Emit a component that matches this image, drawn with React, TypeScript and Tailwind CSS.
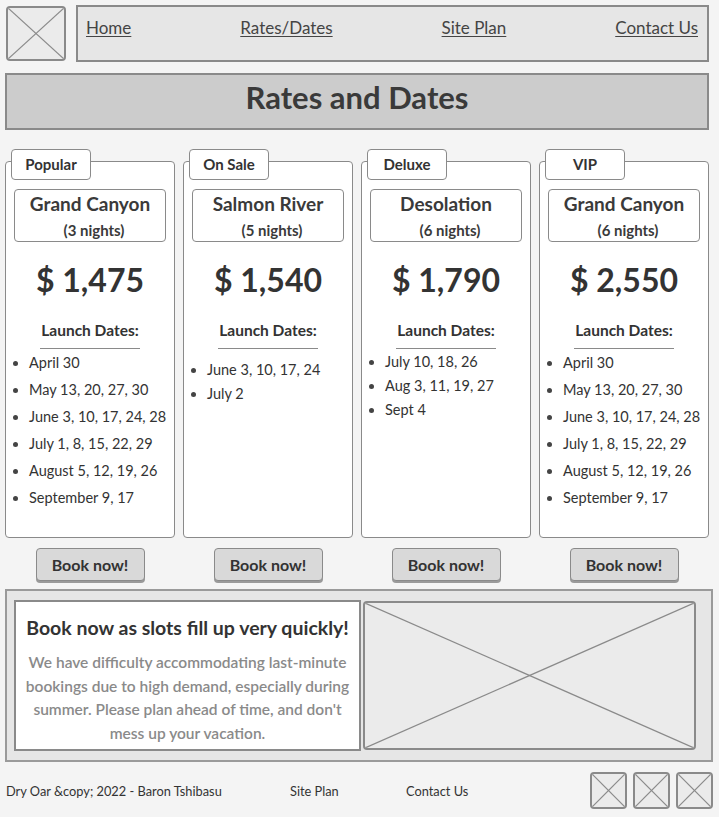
import React from "react";

interface Tour {
  tag: string;
  name: string;
  nights: string;
  price: string;
  dates: string[];
  listClass: string;
}

const tours: Tour[] = [
  {
    tag: "Popular",
    name: "Grand Canyon",
    nights: "(3 nights)",
    price: "$ 1,475",
    dates: ["April 30", "May 13, 20, 27, 30", "June 3, 10, 17, 24, 28", "July 1, 8, 15, 22, 29", "August 5, 12, 19, 26", "September 9, 17"],
    listClass: "leading-[27px] mt-0",
  },
  {
    tag: "On Sale",
    name: "Salmon River",
    nights: "(5 nights)",
    price: "$ 1,540",
    dates: ["June 3, 10, 17, 24", "July 2"],
    listClass: "leading-[24px] mt-[9px]",
  },
  {
    tag: "Deluxe",
    name: "Desolation",
    nights: "(6 nights)",
    price: "$ 1,790",
    dates: ["July 10, 18, 26", "Aug 3, 11, 19, 27", "Sept 4"],
    listClass: "leading-[24px] mt-[1px]",
  },
  {
    tag: "VIP",
    name: "Grand Canyon",
    nights: "(6 nights)",
    price: "$ 2,550",
    dates: ["April 30", "May 13, 20, 27, 30", "June 3, 10, 17, 24, 28", "July 1, 8, 15, 22, 29", "August 5, 12, 19, 26", "September 9, 17"],
    listClass: "leading-[27px] mt-0",
  },
];

function Placeholder({ className }: { className: string }) {
  return (
    <div className={`relative overflow-hidden rounded-[4px] border-2 border-[#8a8a8a] bg-[#ebebeb] ${className}`}>
      <svg className="absolute inset-0 h-full w-full" preserveAspectRatio="none" viewBox="0 0 100 100">
        <line x1="0" y1="0" x2="100" y2="100" stroke="#8a8a8a" strokeWidth="1.2" vectorEffect="non-scaling-stroke" />
        <line x1="100" y1="0" x2="0" y2="100" stroke="#8a8a8a" strokeWidth="1.2" vectorEffect="non-scaling-stroke" />
      </svg>
    </div>
  );
}

function TourCard({ tour }: { tour: Tour }) {
  return (
    <div className="flex flex-col items-center">
      <div className="relative h-[377px] w-full rounded-[4px] border-[1.5px] border-[#8a8a8a] bg-white pt-[27px]">
        <div className="absolute -top-[13px] left-[5px] flex h-[31px] w-[80px] items-center justify-center rounded-[4px] border-[1.5px] border-[#8a8a8a] bg-white text-[15px] font-bold text-[#333]">
          {tour.tag}
        </div>
        <div className="mx-[8px] flex h-[53px] flex-col items-center rounded-[4px] border-[1.5px] border-[#8a8a8a] pt-[2px]">
          <span className="text-[19px] font-bold leading-[24px] text-[#3a3a3a]">{tour.name}</span>
          <span className="mt-[5px] pl-[8px] text-[15px] font-bold leading-[18px] text-[#3a3a3a]">{tour.nights}</span>
        </div>
        <div className="mt-[19px] text-center text-[32px] font-bold leading-[38px] text-[#333]">{tour.price}</div>
        <div className="mt-[21px] text-center text-[15.5px] font-bold leading-[20px] text-[#333]">Launch Dates:</div>
        <div className="mx-auto mt-[8px] w-[100px] border-t border-[#8a8a8a]" />
        <ul className={`list-disc pl-[23px] text-[14.5px] text-[#333] marker:text-[#444] ${tour.listClass}`}>
          {tour.dates.map((d) => (
            <li key={d}>{d}</li>
          ))}
        </ul>
      </div>
      <button className="mt-[10px] h-[33px] w-[109px] rounded-[4px] border-[1.5px] border-[#8a8a8a] bg-[#d9d9d9] text-[16px] font-bold text-[#333] shadow-[0_2px_0_#9a9a9a]">
        Book now!
      </button>
    </div>
  );
}

export default function App() {
  return (
    <div className="min-h-[817px] w-[719px] bg-[#f4f4f4] font-['Lato','Open_Sans',sans-serif] text-[#333]">
      <header className="flex gap-[10px] px-[6px] pt-[5px]">
        <Placeholder className="mt-[1px] h-[55px] w-[60px]" />
        <nav className="flex h-[57px] w-[633px] items-start justify-between border-2 border-[#8a8a8a] bg-[#e6e6e6] pl-[8px] pr-[9px] pt-[8px] text-[17px] text-[#444]">
          <a className="underline underline-offset-2">Home</a>
          <a className="underline underline-offset-2">Rates/Dates</a>
          <a className="underline underline-offset-2">Site Plan</a>
          <a className="underline underline-offset-2">Contact Us</a>
        </nav>
      </header>

      <div className="mx-[5px] mt-[11px] flex h-[57px] w-[704px] items-center justify-center border-2 border-[#8a8a8a] bg-[#cccccc] pb-[9px]">
        <h1 className="text-[31px] font-bold leading-[36px] text-[#3a3a3a]">Rates and Dates</h1>
      </div>

      <section className="mx-[5px] mt-[31px] grid w-[704px] grid-cols-4 gap-[8px]">
        {tours.map((t) => (
          <TourCard key={t.tag} tour={t} />
        ))}
      </section>

      <section className="mx-[5px] mt-[8px] flex h-[173px] w-[708px] gap-[2px] border-2 border-[#9a9a9a] bg-[#e6e6e6] pl-[7px] pt-[9px]">
        <div className="flex h-[151px] w-[347px] flex-col items-center border-2 border-[#8a8a8a] bg-white px-[2px] pt-[14px] text-center">
          <h2 className="whitespace-nowrap text-[19.5px] font-bold leading-[24px] text-[#333]">Book now as slots fill up very quickly!</h2>
          <p className="mt-[11px] text-[15.5px] font-semibold leading-[23.5px] text-[#8a8a8a]">
            We have difficulty accommodating last-minute bookings due to high demand, especially during summer. Please plan ahead of time, and don't mess up your vacation.
          </p>
        </div>
        <Placeholder className="mt-[1px] h-[149px] w-[333px]" />
      </section>

      <footer className="flex items-center px-[6px] pt-[10px] text-[12.8px] text-[#333]">
        <span className="w-[284px] pt-[3px]">Dry Oar &amp;copy; 2022 - Baron Tshibasu</span>
        <span className="w-[116px] pt-[3px]">Site Plan</span>
        <span className="pt-[3px]">Contact Us</span>
        <div className="ml-auto flex gap-[6px]">
          <Placeholder className="h-[37px] w-[37px]" />
          <Placeholder className="h-[37px] w-[37px]" />
          <Placeholder className="h-[37px] w-[37px]" />
        </div>
      </footer>
    </div>
  );
}
